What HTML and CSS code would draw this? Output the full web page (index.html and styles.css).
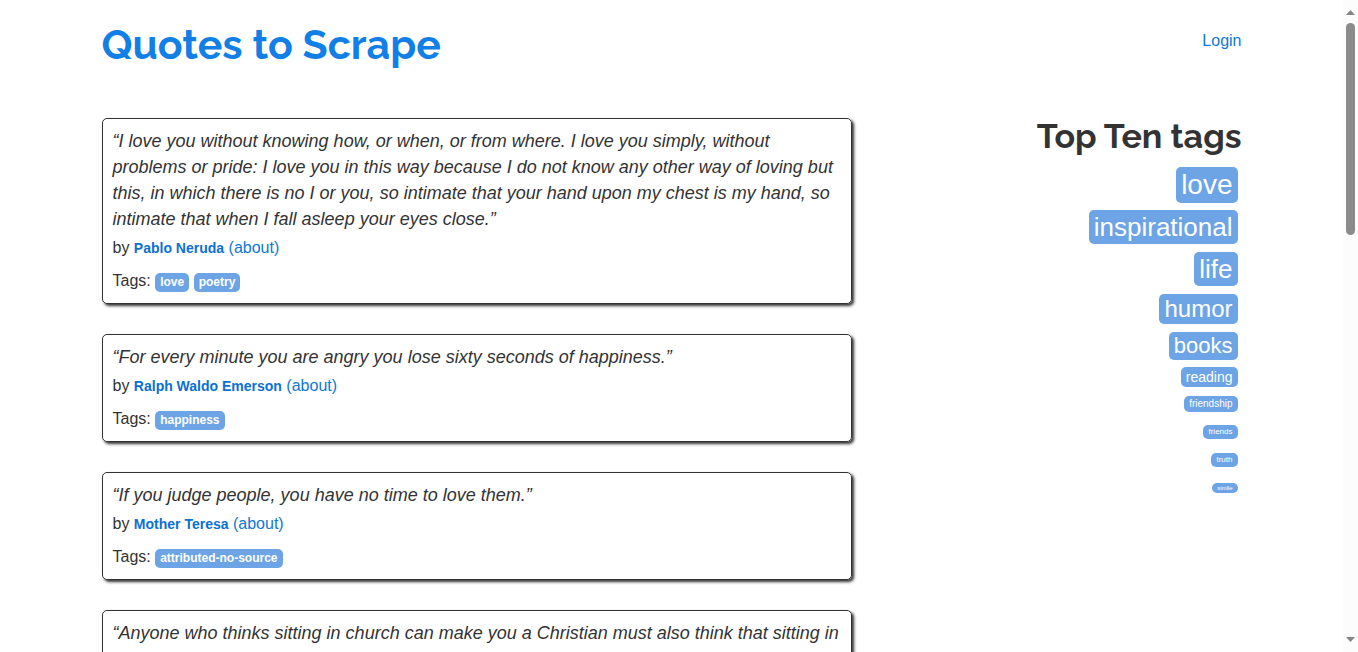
FILE: index.html
```
<!DOCTYPE html>
<html lang="en">
<head>
<meta charset="utf-8">
<title>Quotes to Scrape</title>
<link rel="stylesheet" href="styles.css">
</head>
<body>
<div class="window">
  <div class="container">
    <header class="header">
      <h1 class="site-title"><a href="#">Quotes to Scrape</a></h1>
      <a class="login" href="#">Login</a>
    </header>
    <div class="columns">
      <main>
        <article class="quote">
          <p class="text">“I love you without knowing how, or when, or from where. I love you simply, without problems or pride: I love you in this way because I do not know any other way of loving but this, in which there is no I or you, so intimate that your hand upon my chest is my hand, so intimate that when I fall asleep your eyes close.”</p>
          <p class="byline">by <a class="author" href="#">Pablo Neruda</a> <a href="#">(about)</a></p>
          <div class="tags">Tags: <a class="tag" href="#">love</a> <a class="tag" href="#">poetry</a></div>
        </article>
        <article class="quote">
          <p class="text">“For every minute you are angry you lose sixty seconds of happiness.”</p>
          <p class="byline">by <a class="author" href="#">Ralph Waldo Emerson</a> <a href="#">(about)</a></p>
          <div class="tags">Tags: <a class="tag" href="#">happiness</a></div>
        </article>
        <article class="quote">
          <p class="text">“If you judge people, you have no time to love them.”</p>
          <p class="byline">by <a class="author" href="#">Mother Teresa</a> <a href="#">(about)</a></p>
          <div class="tags">Tags: <a class="tag" href="#">attributed-no-source</a></div>
        </article>
        <article class="quote">
          <p class="text">“Anyone who thinks sitting in church can make you a Christian must also think that sitting in</p>
        </article>
      </main>
      <aside class="top-tags">
        <h2 class="top-title">Top Ten tags</h2>
        <ul class="tag-list">
          <li class="row-xl"><a class="tag size-28" href="#">love</a></li>
          <li class="row-xl"><a class="tag size-26" href="#">inspirational</a></li>
          <li class="row-xl"><a class="tag size-26" href="#">life</a></li>
          <li class="row-lg"><a class="tag size-24" href="#">humor</a></li>
          <li class="row-md"><a class="tag size-22" href="#">books</a></li>
          <li class="row-sm"><a class="tag size-14" href="#">reading</a></li>
          <li><a class="tag size-10" href="#">friendship</a></li>
          <li><a class="tag size-8" href="#">friends</a></li>
          <li><a class="tag size-8" href="#">truth</a></li>
          <li><a class="tag size-6" href="#">simile</a></li>
        </ul>
      </aside>
    </div>
  </div>
  <div class="scrollbar" aria-hidden="true">
    <svg class="arrow" viewBox="0 0 9 5"><path d="M4.5 0 9 5H0z"/></svg>
    <div class="track"><div class="thumb"></div></div>
    <svg class="arrow" viewBox="0 0 9 5"><path d="M0 0h9L4.500 5z"/></svg>
  </div>
</div>
</body>
</html>
```

FILE: styles.css
```
* { box-sizing: border-box; }

body {
  margin: 0;
  background: #fff;
  color: #333;
  font: 16px/23px "Liberation Sans", Arial, sans-serif;
}

h1, h2, p, ul { margin: 0; padding: 0; }

a { color: #0f78d8; text-decoration: none; }

.window {
  display: flex;
  height: 100vh;
  overflow: hidden;
}

.container {
  flex: 1;
  max-width: 1170px;
  margin: 0 auto;
  padding: 0 15px;
}

.header {
  display: flex;
  justify-content: space-between;
  padding-top: 20px;
  height: 118px;
}

.site-title {
  font: bold 41px/50px Raleway, "Open Sans", sans-serif;
}
.site-title a { color: #127fe6; }

.login { margin-top: 9px; }

.columns {
  display: grid;
  grid-template-columns: 25fr 12fr;
  gap: 30px;
}

.quote {
  margin-bottom: 30px;
  padding: 9px 10px 11px;
  border: 1px solid #333;
  border-radius: 5px;
  box-shadow: 2px 2px 3px #333;
}

.text {
  font-size: 18px;
  line-height: 26px;
  font-style: italic;
}

.byline { margin-top: 4px; }

.author {
  color: #0b70d2;
  font-size: 14px;
  font-weight: bold;
}

.tags {
  margin-top: 10px;
  line-height: 22px;
}

.tag {
  display: inline-block;
  padding: 3px 5px;
  border-radius: 5px;
  background: #6ca4e6;
  color: #fff;
  line-height: 1;
}

.tags .tag {
  padding-bottom: 4px;
  font-size: 12px;
  font-weight: bold;
}

.top-tags { text-align: right; }

.top-title {
  font: bold 34px/36px Raleway, "Open Sans", sans-serif;
  padding-bottom: 10px;
}

.tag-list {
  display: flex;
  flex-direction: column;
  padding-right: 4px;
  list-style: none;
}

.tag-list li {
  display: flex;
  align-items: center;
  justify-content: flex-end;
  height: 28px;
}
.tag-list .row-xl { height: 42px; }
.tag-list .row-lg { height: 38px; }
.tag-list .row-md { height: 36px; }
.tag-list .row-sm { height: 26px; }

.row-xl .tag { padding: 4px 5px; }

.size-28 { font-size: 28px; }
.size-26 { font-size: 26px; }
.size-24 { font-size: 24px; }
.size-22 { font-size: 22px; }
.size-14 { font-size: 14px; }
.size-10 { font-size: 10px; }
.size-8 { font-size: 8px; }
.size-6 { font-size: 6px; padding: 2px 5px; }

.scrollbar {
  display: flex;
  flex-direction: column;
  align-items: center;
  width: 15px;
  padding: 10px 0;
  background: #fcfcfc;
}

.arrow { width: 9px; height: 5px; fill: #858585; }

.track { flex: 1; padding: 8px 0; }

.thumb {
  width: 9px;
  height: 35%;
  border-radius: 5px;
  background: #8b8b8b;
}
```
